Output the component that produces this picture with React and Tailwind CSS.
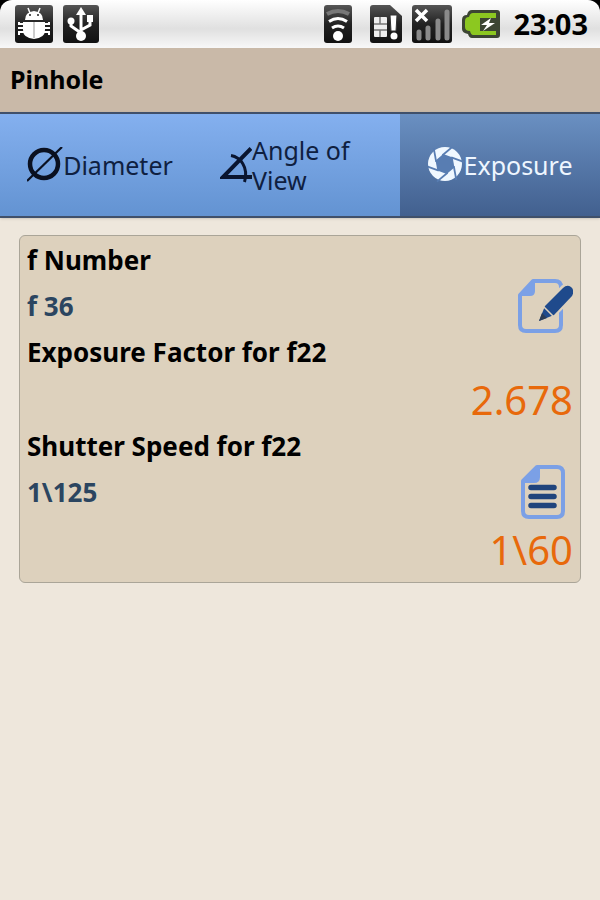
import { useState } from 'react'

const TABS = [
  { id: 'diameter', label: 'Diameter', Icon: DiameterIcon },
  { id: 'angle', label: 'Angle of View', Icon: AngleIcon },
  { id: 'exposure', label: 'Exposure', Icon: ApertureIcon },
]

function DiameterIcon() {
  return (
    <svg viewBox="0 0 36 36" className="w-9 h-9 shrink-0" fill="none" stroke="#0a1020">
      <circle cx="17" cy="17" r="14" strokeWidth="4.500" />
      <path d="M0 34 35 0" strokeWidth="2.200" />
    </svg>
  )
}

function AngleIcon() {
  return (
    <svg viewBox="0 0 32 36" className="w-8 h-9 shrink-0" fill="none" stroke="#0a1530">
      <path d="M31 1.500 3 30H32" strokeWidth="4" />
      <path d="M11 8.500C20 10 29 20 24.500 35" strokeWidth="3" />
    </svg>
  )
}

function ApertureIcon() {
  return (
    <svg viewBox="0 0 36 36" className="w-9 h-9 shrink-0">
      <circle cx="17" cy="17" r="17" fill="#f0f8ff" />
      <g transform="rotate(20 17 17)">
        <path d="M27 17 22 25.700H12L7 17 12 8.300H22z" fill="#587db2" />
        {[0, 60, 120, 180, 240, 300].map((a) => (
          <path key={a} d="M26 16 33 28" stroke="#587db2" strokeWidth="1.800" transform={`rotate(${a} 17 17)`} />
        ))}
      </g>
    </svg>
  )
}

function EditIcon() {
  return (
    <svg viewBox="-2 0 58 56" className="w-[58px] h-14">
      <path d="M16 3H38q6 0 6 6V47q0 6-6 6H9q-6 0-6-6V17z" fill="none" stroke="#7ba0e6" strokeWidth="4" strokeLinejoin="round" />
      <path d="M18 2V13q0 5-5 5H2z" fill="#7ba0e6" />
      <path d="M22 43 28 28 46 9q5-4 9 0t1 9L37 37z" fill="#ddd1bd" stroke="#ddd1bd" strokeWidth="4" />
      <path d="M22 43 28 28 46 10q4-4 8-1t1 9L37 37z" fill="#1f4a8c" />
      <path d="M27 29 36 38" stroke="#ddd1bd" strokeWidth="1.500" />
      <path d="M22 43 25 35 30 40z" fill="#2c3c55" />
    </svg>
  )
}

function ListIcon() {
  return (
    <svg viewBox="0 0 44 56" className="w-11 h-14">
      <path d="M16 3H36q6 0 6 6V47q0 6-6 6H8q-6 0-6-6V17z" fill="none" stroke="#7ba0e6" strokeWidth="4" strokeLinejoin="round" />
      <path d="M19 2V13q0 6-6 6H1z" fill="#7ba0e6" />
      <path d="M10 23.500H33M10 32.500H33M10 41.500H33" stroke="#20447c" strokeWidth="5.500" strokeLinecap="round" />
    </svg>
  )
}

function BugIcon() {
  return (
    <svg viewBox="0 0 40 40" className="w-10 h-10">
      <rect x="1" y="1" width="38" height="38" rx="3" fill="url(#tile)" />
      <path d="M11 16q0-8 9-9 9 1 9 9z" fill="#fff" />
      <path d="m14 4 2 5m10-5-2 5" stroke="#fff" strokeWidth="1.500" />
      <circle cx="16" cy="11" r="1" fill="#222" />
      <circle cx="24" cy="11" r="1" fill="#222" />
      <path d="M9 18h22v8q0 8-11 9-11-1-11-9z" fill="#fff" />
      <path d="M20 18v16" stroke="#999" strokeWidth="1" />
      <path d="M10 20H5v-2m5 6H4m6 4H5v3M30 20h5v-2m-5 6h6m-6 4h5v3" stroke="#fff" strokeWidth="2" fill="none" />
    </svg>
  )
}

function UsbIcon() {
  return (
    <svg viewBox="0 0 38 40" className="w-[38px] h-10">
      <rect x="1" y="1" width="36" height="38" rx="3" fill="url(#tile)" />
      <path d="M19 32V8M19 29 9 22V17M19 26l9-5V15" stroke="#fff" strokeWidth="3" fill="none" />
      <path d="m19 3 5 8H14z" fill="#fff" />
      <circle cx="19" cy="32" r="5" fill="#fff" />
      <circle cx="9" cy="17" r="3.500" fill="#fff" />
      <rect x="25" y="11" width="6" height="7" fill="#fff" />
    </svg>
  )
}

function WifiIcon() {
  return (
    <svg viewBox="0 0 30 40" className="w-[30px] h-10">
      <rect x="1" y="1" width="28" height="38" rx="3" fill="url(#tile)" />
      <path d="M4 10q11-6 22 0" stroke="#777" strokeWidth="4" fill="none" />
      <path d="M6 17.500q9-6 18 0M9 24q6-4 12 0" stroke="#fff" strokeWidth="3" fill="none" />
      <circle cx="15" cy="32" r="5" fill="#fff" />
    </svg>
  )
}

function SimIcon() {
  return (
    <svg viewBox="0 0 34 40" className="w-[34px] h-10">
      <path d="M4 1H21L33 12V36q0 3-3 3H4q-3 0-3-3V4q0-3 3-3z" fill="url(#tile)" />
      <rect x="5" y="13" width="13" height="20" rx="1" fill="#eee" />
      <path d="M5 20h13M5 26h13M11 13v7m0 6v7" stroke="#777" strokeWidth="1.500" />
      <path d="M21 11h7l-1 16h-5z" fill="#fff" stroke="#333" strokeWidth="1" />
      <circle cx="25" cy="32" r="3.500" fill="#fff" />
    </svg>
  )
}

function SignalIcon() {
  return (
    <svg viewBox="0 0 42 40" className="w-[42px] h-10">
      <rect x="1" y="1" width="40" height="38" rx="3" fill="url(#tile)" />
      <path d="M8 34V28M17 34V24M27 34V17M36 34V8" stroke="#8a8a8a" strokeWidth="5" strokeLinecap="round" />
      <path d="m5 6 11 11M16 6 5 17" stroke="#fff" strokeWidth="3.500" />
    </svg>
  )
}

function BatteryIcon() {
  return (
    <svg viewBox="0 0 40 30" className="w-10 h-[30px]">
      <path d="M11 1H36q3 0 3 3V26q0 3-3 3H11q-3 0-4-4-6-1-6-5V11q0-5 5-5 1-5 5-5z" fill="#3c4533" />
      <path d="M12 4H35v5H19v13h16v4H12q-2 0-3-4-5 0-5-4V12q0-4 4-4 1-4 4-4z" fill="#8cc820" />
      <path d="m30 9-10 7h6l-4 6 12-8h-6z" fill="#fff" />
    </svg>
  )
}

function StatusBar() {
  return (
    <div className="bg-black">
      <header className="flex h-12 items-center rounded-t-xl bg-linear-to-b from-white via-[#e0e0e0] via-60% to-[#f8f8f8] px-[14px] pr-3">
        <svg className="absolute w-0 h-0" aria-hidden="true">
          <linearGradient id="tile" x2="0" y2="1">
            <stop stopColor="#555" />
            <stop offset="0.500" stopColor="#222" />
            <stop offset="1" stopColor="#111" />
          </linearGradient>
        </svg>
        <div className="flex items-center gap-2">
          <BugIcon />
          <UsbIcon />
        </div>
        <div className="ml-auto flex items-center gap-2">
          <WifiIcon />
          <span className="pl-2"><SimIcon /></span>
          <SignalIcon />
          <BatteryIcon />
          <time className="pl-1 text-[29px] font-bold text-black">23:03</time>
        </div>
      </header>
    </div>
  )
}

function Label({ children }) {
  return <h2 className="h-9 text-[26px] leading-9 font-bold text-black">{children}</h2>
}

function Field({ value, action, children }) {
  return (
    <div className="flex h-14 items-center justify-between">
      <span className="text-[26px] font-bold text-[#2b4560]">{value}</span>
      <button type="button" aria-label={action} className="cursor-pointer">
        {children}
      </button>
    </div>
  )
}

function Result({ children }) {
  return <p className="h-[58px] text-right text-[40px] leading-[60px] text-[#e8690b]">{children}</p>
}

export default function App() {
  const [tab, setTab] = useState('exposure')

  return (
    <div className="min-h-screen bg-[#eee7dc] font-['Noto_Sans',sans-serif]">
      <StatusBar />
      <div className="flex h-16 items-center bg-[#c9b9a8] px-[10px]">
        <h1 className="text-[25px] font-bold text-black">Pinhole</h1>
      </div>

      <nav role="tablist" className="grid grid-cols-3 border-y-2 border-[#40506a] shadow-sm">
        {TABS.map(({ id, label, Icon }) => (
          <button
            key={id}
            type="button"
            role="tab"
            aria-selected={tab === id}
            onClick={() => setTab(id)}
            className={`flex h-[102px] items-center justify-center px-5 text-left text-[25px] leading-[30px] cursor-pointer bg-linear-to-b ${
              tab === id
                ? 'from-[#6a90c2] to-[#42608f] text-[#eef6ff]'
                : 'from-[#84b0ef] to-[#6393d2] text-[#0f2040]'
            }`}
          >
            <Icon />
            <span>{label}</span>
          </button>
        ))}
      </nav>

      <main className="px-[19px] pt-[17px]">
        <section className="rounded-md border border-[#aaa598] bg-[#ddd1bd] px-[7px] pt-[6px] pb-1">
          <Label>f Number</Label>
          <Field value="f 36" action="Edit f number">
            <EditIcon />
          </Field>
          <Label>Exposure Factor for f22</Label>
          <Result>2.678</Result>
          <Label>Shutter Speed for f22</Label>
          <Field value="1\125" action="Choose shutter speed">
            <span className="block pr-2"><ListIcon /></span>
          </Field>
          <Result>1\60</Result>
        </section>
      </main>
    </div>
  )
}
